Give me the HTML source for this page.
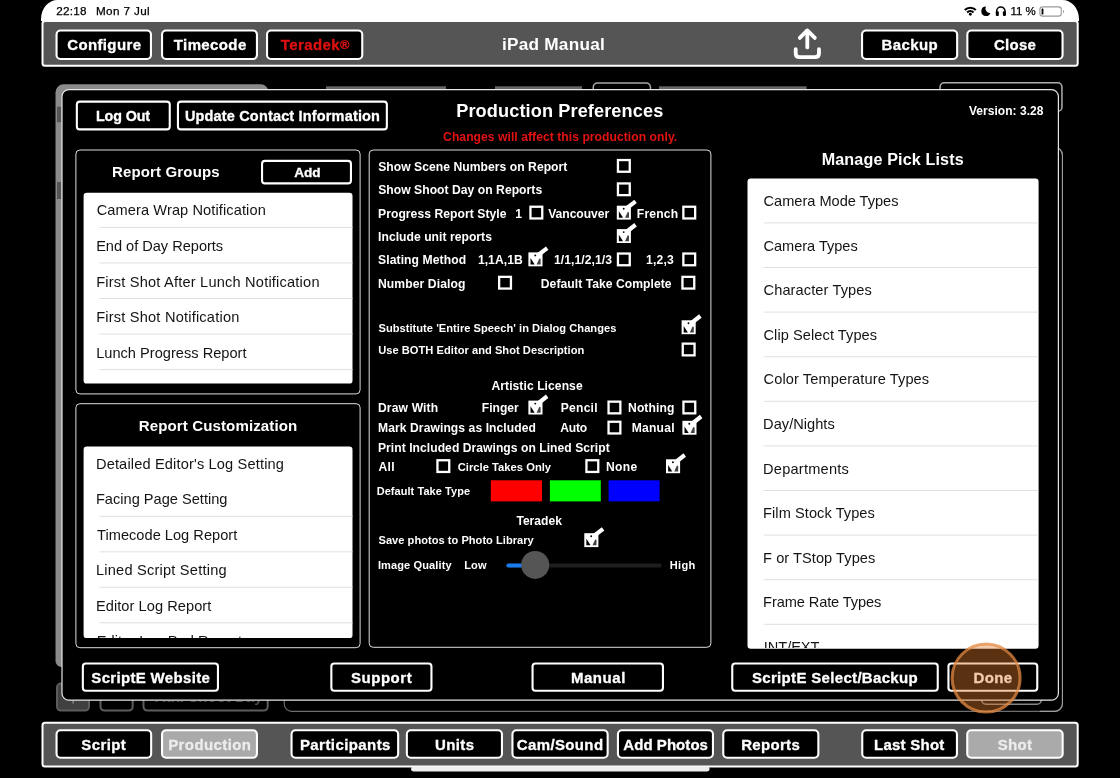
<!DOCTYPE html>
<html lang="en"><head><meta charset="utf-8"><title>Production Preferences</title>
<style>
html,body{margin:0;padding:0;background:#000;}
body{will-change:transform;width:1120px;height:778px;position:relative;overflow:hidden;font-family:"Liberation Sans",Arial,Helvetica,sans-serif;color:#fff;}
div,svg{position:absolute;box-sizing:content-box;}
.t{white-space:pre;font-weight:bold;}
.list{overflow:hidden;}
</style></head><body>

<svg style="left:0;top:0" width="1120" height="778" viewBox="0 0 1120 778">
<path d="M41 21 V19 A16.5 19 0 0 1 57.5 0 H1062.5 A16.5 19 0 0 1 1079 19 V21 Z" fill="#fff"/>
<rect x="42.5" y="21.0" width="1035.2" height="44.8" rx="2.5" fill="#555" stroke="#fff" stroke-width="2"/>
<rect x="56.55" y="30.55" width="94.4" height="28.4" rx="3.95" fill="#000" stroke="#fff" stroke-width="2.1"/>
<rect x="162.05" y="30.55" width="94.9" height="28.4" rx="3.95" fill="#000" stroke="#fff" stroke-width="2.1"/>
<rect x="267.05" y="30.55" width="95.2" height="28.4" rx="3.95" fill="#000" stroke="#fff" stroke-width="2.1"/>
<rect x="862.05" y="30.55" width="95.1" height="28.4" rx="3.95" fill="#000" stroke="#fff" stroke-width="2.1"/>
<rect x="967.35" y="30.55" width="95.2" height="28.4" rx="3.95" fill="#000" stroke="#fff" stroke-width="2.1"/>
<path d="M55.5 661 V92.3 A8 8 0 0 1 63.5 84.3 H260.7 A8 8 0 0 1 268.7 92.3 V120 H62 V667 H61.5 A6 6 0 0 1 55.5 661 Z" fill="#8a8a8a"/>
<rect x="57.0" y="106.7" width="4" height="15.5" fill="#555"/>
<rect x="57.0" y="182.0" width="4" height="17" fill="#555"/>
<rect x="326.0" y="86.3" width="120" height="3.2" fill="#666"/>
<rect x="495.0" y="86.3" width="87" height="3.2" fill="#666"/>
<rect x="593.25" y="83.05" width="57.2" height="28.2" rx="4.25" fill="none" stroke="#a8a8a8" stroke-width="1.5"/>
<rect x="659.0" y="86.3" width="147.6" height="3.2" fill="#666"/>
<rect x="940.05" y="82.75" width="121.9" height="28.5" rx="4.25" fill="none" stroke="#adadad" stroke-width="1.5"/>
<rect x="284.25" y="147.35" width="778.2" height="564.0" rx="7.45" fill="none" stroke="#6e6e6e" stroke-width="1.1"/>
<path d="M1050 147.35 H1054.45 A8 8 0 0 1 1062.45 155.35 V703.35 A8 8 0 0 1 1054.45 711.35 H1040" fill="none" stroke="#9c9c9c" stroke-width="1.1"/>
<rect x="57.0" y="683.5" width="32" height="27.1" rx="4.0" fill="#404040" stroke="#5c5c5c" stroke-width="2"/>
<rect x="72.3" y="700.6" width="1.7" height="3.0" fill="#7a7a7a"/>
<rect x="100.5" y="683.5" width="32.2" height="27.1" rx="4.0" fill="none" stroke="#5c5c5c" stroke-width="2"/>
<rect x="143.5" y="683.5" width="124.2" height="27.1" rx="4.0" fill="none" stroke="#5c5c5c" stroke-width="2"/>
<rect x="981.75" y="680.75" width="59.5" height="23.5" rx="4.25" fill="none" stroke="#858585" stroke-width="1.5"/>
<rect x="62.0" y="89.65" width="996.4" height="610.45" rx="6.9" fill="#000" stroke="#e6e6e6" stroke-width="1.2"/>
<rect x="76.85" y="101.65" width="92.9" height="27.7" rx="2.95" fill="#000" stroke="#fff" stroke-width="2.1"/>
<rect x="177.95" y="101.65" width="208.9" height="27.7" rx="2.95" fill="#000" stroke="#fff" stroke-width="2.1"/>
<rect x="75.9" y="150.0" width="284.2" height="243.9" rx="4.0" fill="#000" stroke="#dcdcdc" stroke-width="1"/>
<rect x="262.05" y="160.85" width="88.9" height="22.5" rx="2.95" fill="#000" stroke="#fff" stroke-width="2.1"/>
<rect x="83.6" y="192.7" width="268.9" height="190.9" rx="3.2" fill="#fff"/>
<rect x="75.9" y="403.7" width="284.2" height="244.0" rx="4.0" fill="#000" stroke="#dcdcdc" stroke-width="1"/>
<rect x="83.6" y="446.5" width="268.9" height="191.6" rx="3.2" fill="#fff"/>
<rect x="369.2" y="150.0" width="341.7" height="497.3" rx="4.0" fill="#000" stroke="#dcdcdc" stroke-width="1"/>
<rect x="617.95" y="160.05" width="11.8" height="11.7" fill="#000" stroke="#fff" stroke-width="2.3"/>
<rect x="617.95" y="183.45" width="11.8" height="11.7" fill="#000" stroke="#fff" stroke-width="2.3"/>
<rect x="530.45" y="206.75" width="11.8" height="11.7" fill="#000" stroke="#fff" stroke-width="2.3"/>
<g transform="translate(616.8 205.7)"><rect x="0" y="0" width="14.1" height="13.9" fill="#fff"/><path d="M2.1 5.6 L6.3 12.1 L2.1 12.1 Z" fill="#000"/><path d="M10.9 6.2 L12.2 6.6 L12.2 12.1 L8.2 12.1 Z" fill="#444"/><circle cx="6.9" cy="3.0" r="0.95" fill="#000"/><path d="M9.0 0.6 L17.5 -6.0 L20.0 -2.6 L13.6 2.4 Z" fill="#fff"/></g>
<rect x="683.35" y="206.75" width="11.8" height="11.7" fill="#000" stroke="#fff" stroke-width="2.3"/>
<g transform="translate(616.8 229.1)"><rect x="0" y="0" width="14.1" height="13.9" fill="#fff"/><path d="M2.1 5.6 L6.3 12.1 L2.1 12.1 Z" fill="#000"/><path d="M10.9 6.2 L12.2 6.6 L12.2 12.1 L8.2 12.1 Z" fill="#444"/><circle cx="6.9" cy="3.0" r="0.95" fill="#000"/><path d="M9.0 0.6 L17.5 -6.0 L20.0 -2.6 L13.6 2.4 Z" fill="#fff"/></g>
<g transform="translate(528.4 252.4)"><rect x="0" y="0" width="14.1" height="13.9" fill="#fff"/><path d="M2.1 5.6 L6.3 12.1 L2.1 12.1 Z" fill="#000"/><path d="M10.9 6.2 L12.2 6.6 L12.2 12.1 L8.2 12.1 Z" fill="#444"/><circle cx="6.9" cy="3.0" r="0.95" fill="#000"/><path d="M9.0 0.6 L17.5 -6.0 L20.0 -2.6 L13.6 2.4 Z" fill="#fff"/></g>
<rect x="617.95" y="253.55" width="11.8" height="11.7" fill="#000" stroke="#fff" stroke-width="2.3"/>
<rect x="683.35" y="253.55" width="11.8" height="11.7" fill="#000" stroke="#fff" stroke-width="2.3"/>
<rect x="499.15" y="276.85" width="11.8" height="11.7" fill="#000" stroke="#fff" stroke-width="2.3"/>
<rect x="682.45" y="276.85" width="11.8" height="11.7" fill="#000" stroke="#fff" stroke-width="2.3"/>
<g transform="translate(681.6 320.3)"><rect x="0" y="0" width="14.1" height="13.9" fill="#fff"/><path d="M2.1 5.6 L6.3 12.1 L2.1 12.1 Z" fill="#000"/><path d="M10.9 6.2 L12.2 6.6 L12.2 12.1 L8.2 12.1 Z" fill="#444"/><circle cx="6.9" cy="3.0" r="0.95" fill="#000"/><path d="M9.0 0.6 L17.5 -6.0 L20.0 -2.6 L13.6 2.4 Z" fill="#fff"/></g>
<rect x="682.75" y="343.65" width="11.8" height="11.7" fill="#000" stroke="#fff" stroke-width="2.3"/>
<g transform="translate(528.4 400.6)"><rect x="0" y="0" width="14.1" height="13.9" fill="#fff"/><path d="M2.1 5.6 L6.3 12.1 L2.1 12.1 Z" fill="#000"/><path d="M10.9 6.2 L12.2 6.6 L12.2 12.1 L8.2 12.1 Z" fill="#444"/><circle cx="6.9" cy="3.0" r="0.95" fill="#000"/><path d="M9.0 0.6 L17.5 -6.0 L20.0 -2.6 L13.6 2.4 Z" fill="#fff"/></g>
<rect x="608.55" y="401.65" width="11.8" height="11.7" fill="#000" stroke="#fff" stroke-width="2.3"/>
<rect x="683.45" y="401.65" width="11.8" height="11.7" fill="#000" stroke="#fff" stroke-width="2.3"/>
<rect x="608.55" y="421.75" width="11.8" height="11.7" fill="#000" stroke="#fff" stroke-width="2.3"/>
<g transform="translate(682.4 420.8)"><rect x="0" y="0" width="14.1" height="13.9" fill="#fff"/><path d="M2.1 5.6 L6.3 12.1 L2.1 12.1 Z" fill="#000"/><path d="M10.9 6.2 L12.2 6.6 L12.2 12.1 L8.2 12.1 Z" fill="#444"/><circle cx="6.9" cy="3.0" r="0.95" fill="#000"/><path d="M9.0 0.6 L17.5 -6.0 L20.0 -2.6 L13.6 2.4 Z" fill="#fff"/></g>
<rect x="437.45" y="460.25" width="11.8" height="11.7" fill="#000" stroke="#fff" stroke-width="2.3"/>
<rect x="586.45" y="460.25" width="11.8" height="11.7" fill="#000" stroke="#fff" stroke-width="2.3"/>
<g transform="translate(666.0 459.3)"><rect x="0" y="0" width="14.1" height="13.9" fill="#fff"/><path d="M2.1 5.6 L6.3 12.1 L2.1 12.1 Z" fill="#000"/><path d="M10.9 6.2 L12.2 6.6 L12.2 12.1 L8.2 12.1 Z" fill="#444"/><circle cx="6.9" cy="3.0" r="0.95" fill="#000"/><path d="M9.0 0.6 L17.5 -6.0 L20.0 -2.6 L13.6 2.4 Z" fill="#fff"/></g>
<rect x="490.8" y="480.3" width="51.2" height="21.1" fill="#f00"/>
<rect x="549.9" y="480.3" width="50.9" height="21.1" fill="#0f0"/>
<rect x="608.6" y="480.3" width="51.0" height="21.1" fill="#00f"/>
<g transform="translate(584.3 533.2)"><rect x="0" y="0" width="14.1" height="13.9" fill="#fff"/><path d="M2.1 5.6 L6.3 12.1 L2.1 12.1 Z" fill="#000"/><path d="M10.9 6.2 L12.2 6.6 L12.2 12.1 L8.2 12.1 Z" fill="#444"/><circle cx="6.9" cy="3.0" r="0.95" fill="#000"/><path d="M9.0 0.6 L17.5 -6.0 L20.0 -2.6 L13.6 2.4 Z" fill="#fff"/></g>
<rect x="506.4" y="563.6" width="155.3" height="4.0" rx="2.0" fill="#1e1e20"/>
<rect x="506.4" y="563.6" width="23.6" height="4.0" rx="2.0" fill="#1a7bf0"/>
<circle cx="535.2" cy="564.9" r="14" fill="#555"/>
<rect x="747.5" y="178.5" width="291.1" height="470.3" rx="3.2" fill="#fff"/>
<rect x="82.85" y="663.45" width="135.1" height="27.3" rx="2.95" fill="#000" stroke="#fff" stroke-width="2.1"/>
<rect x="331.35" y="663.45" width="100.1" height="27.3" rx="2.95" fill="#000" stroke="#fff" stroke-width="2.1"/>
<rect x="532.55" y="663.45" width="130.4" height="27.3" rx="2.95" fill="#000" stroke="#fff" stroke-width="2.1"/>
<rect x="732.25" y="663.45" width="205.5" height="27.3" rx="2.95" fill="#000" stroke="#fff" stroke-width="2.1"/>
<rect x="948.45" y="663.45" width="88.8" height="27.3" rx="2.95" fill="#000" stroke="#fff" stroke-width="2.1"/>
<rect x="42.5" y="722.7" width="1035.2" height="43.8" rx="2.5" fill="#555" stroke="#fff" stroke-width="2"/>
<rect x="56.55" y="730.25" width="94.6" height="27.5" rx="3.95" fill="#000" stroke="#fff" stroke-width="2.1"/>
<rect x="162.05" y="730.25" width="94.9" height="27.5" rx="3.95" fill="#aaa" stroke="#fff" stroke-width="2.1"/>
<rect x="291.55" y="730.25" width="106.6" height="27.5" rx="3.95" fill="#000" stroke="#fff" stroke-width="2.1"/>
<rect x="406.85" y="730.25" width="95.1" height="27.5" rx="3.95" fill="#000" stroke="#fff" stroke-width="2.1"/>
<rect x="512.45" y="730.25" width="95.2" height="27.5" rx="3.95" fill="#000" stroke="#fff" stroke-width="2.1"/>
<rect x="617.95" y="730.25" width="95.0" height="27.5" rx="3.95" fill="#000" stroke="#fff" stroke-width="2.1"/>
<rect x="723.25" y="730.25" width="95.1" height="27.5" rx="3.95" fill="#000" stroke="#fff" stroke-width="2.1"/>
<rect x="862.25" y="730.25" width="94.7" height="27.5" rx="3.95" fill="#000" stroke="#fff" stroke-width="2.1"/>
<rect x="967.25" y="730.25" width="95.4" height="27.5" rx="3.95" fill="#aaa" stroke="#fff" stroke-width="2.1"/>
<rect x="411.0" y="766.6" width="298.6" height="4.8" rx="2.4" fill="#eee"/>
<rect x="99.5" y="226.9" width="253.0" height="1.0" fill="#e0e0e0"/>
<rect x="99.5" y="262.45" width="253.0" height="1.0" fill="#e0e0e0"/>
<rect x="99.5" y="298.0" width="253.0" height="1.0" fill="#e0e0e0"/>
<rect x="99.5" y="333.55" width="253.0" height="1.0" fill="#e0e0e0"/>
<rect x="99.5" y="369.1" width="253.0" height="1.0" fill="#e0e0e0"/>
<rect x="99.5" y="515.87" width="253.0" height="1.0" fill="#e0e0e0"/>
<rect x="99.5" y="551.34" width="253.0" height="1.0" fill="#e0e0e0"/>
<rect x="99.5" y="586.81" width="253.0" height="1.0" fill="#e0e0e0"/>
<rect x="99.5" y="622.28" width="253.0" height="1.0" fill="#e0e0e0"/>
<rect x="763.7" y="222.4" width="274.6" height="1.0" fill="#e0e0e0"/>
<rect x="763.7" y="267.0" width="274.6" height="1.0" fill="#e0e0e0"/>
<rect x="763.7" y="311.6" width="274.6" height="1.0" fill="#e0e0e0"/>
<rect x="763.7" y="356.2" width="274.6" height="1.0" fill="#e0e0e0"/>
<rect x="763.7" y="400.8" width="274.6" height="1.0" fill="#e0e0e0"/>
<rect x="763.7" y="445.4" width="274.6" height="1.0" fill="#e0e0e0"/>
<rect x="763.7" y="490.0" width="274.6" height="1.0" fill="#e0e0e0"/>
<rect x="763.7" y="534.6" width="274.6" height="1.0" fill="#e0e0e0"/>
<rect x="763.7" y="579.2" width="274.6" height="1.0" fill="#e0e0e0"/>
<rect x="763.7" y="623.8" width="274.6" height="1.0" fill="#e0e0e0"/>
</svg>
<div id="t1" class="t" style="left:56.19px;top:5.3px;font-size:11.7px;line-height:11.7px;font-weight:normal;color:#000;letter-spacing:0.277px;-webkit-text-stroke:0.25px #000;">22:18</div>
<div id="t2" class="t" style="left:95.88px;top:5.3px;font-size:11.7px;line-height:11.7px;font-weight:normal;color:#000;letter-spacing:0.395px;-webkit-text-stroke:0.25px #000;">Mon 7 Jul</div>
<div id="t3" class="t" style="left:1010.43px;top:6.47px;font-size:11.5px;line-height:11.5px;font-weight:normal;color:#000;letter-spacing:-0.035px;-webkit-text-stroke:0.25px #000;">11 %</div>
<svg style="left:960px;top:2px" width="110" height="18" viewBox="960 2 110 18">
<g fill="none" stroke="#000">
<path d="M964.78 10.08 A7.8 7.8 0 0 1 975.82 10.08" stroke-width="2.1"/>
<path d="M967.12 12.42 A4.5 4.5 0 0 1 973.48 12.42" stroke-width="2"/>
</g>
<circle cx="970.3" cy="14.3" r="1.45" fill="#000"/>
<path d="M985.9 6.6 A4.7 4.7 0 1 0 990.4 12.9 A4.4 4.4 0 0 1 985.9 6.6 Z" fill="#000"/>
<path d="M996.65 15.2 V11.2 A4.2 4.2 0 0 1 1005.05 11.2 V15.2" fill="none" stroke="#000" stroke-width="1.5"/>
<rect x="995.9" y="11.3" width="2.9" height="4.6" rx="0.9" fill="#000"/>
<rect x="1002.9" y="11.3" width="2.9" height="4.6" rx="0.9" fill="#000"/>
<rect x="1039.9" y="6.9" width="21.4" height="9.2" rx="2.7" fill="none" stroke="#9a9a9a" stroke-width="1.1"/>
<rect x="1041.6" y="8.5" width="1.8" height="6.1" rx="0.6" fill="#000"/>
<path d="M1063 9.7 Q1065.2 11.5 1063 13.3 Z" fill="#9a9a9a"/>
</svg>
<div id="t4" class="t" style="left:67.22px;top:36.57px;font-size:15px;line-height:15px;letter-spacing:0.367px;-webkit-text-stroke:0.3px #fff;">Configure</div>
<div id="t5" class="t" style="left:173.86px;top:36.57px;font-size:15px;line-height:15px;letter-spacing:0.373px;-webkit-text-stroke:0.3px #fff;">Timecode</div>
<div id="t6" class="t" style="left:280.82px;top:36.57px;font-size:15px;line-height:15px;color:#e01010;letter-spacing:0.391px;-webkit-text-stroke:0.3px #e01010;">Teradek<span style="font-size:12.8px;vertical-align:0.8px">®</span></div>
<div id="t7" class="t" style="left:501.91px;top:36.14px;font-size:17.2px;line-height:17.2px;letter-spacing:0.262px;">iPad Manual</div>
<svg style="left:788px;top:24px" width="40" height="40" viewBox="788 24 40 40">
<g fill="none" stroke="#fff" stroke-width="3.8" stroke-linecap="round" stroke-linejoin="round">
<path d="M807.3 30.6 V47.4"/>
<path d="M799.8 37.9 L807.3 30.4 L814.8 37.9"/>
<path d="M795.7 49.2 V53.2 Q795.7 57.2 799.7 57.2 H815 Q819 57.2 819 53.2 V49.2"/>
</g></svg>
<div id="t8" class="t" style="left:881.45px;top:36.57px;font-size:15px;line-height:15px;letter-spacing:0.416px;-webkit-text-stroke:0.3px #fff;">Backup</div>
<div id="t9" class="t" style="left:993.99px;top:36.57px;font-size:15px;line-height:15px;letter-spacing:0.283px;-webkit-text-stroke:0.3px #fff;">Close</div>
<div style="left:140px;top:701px;width:130px;height:11px;overflow:hidden;"><div id="t10" class="t" style="left:15.0px;top:-11.7px;font-size:15px;line-height:15px;color:#4a4a4a;">Add Shoot Day</div></div>
<div id="t11" class="t" style="left:95.92px;top:108.66px;font-size:14.3px;line-height:14.3px;letter-spacing:-0.108px;-webkit-text-stroke:0.3px #fff;">Log Out</div>
<div id="t12" class="t" style="left:184.89px;top:108.57px;font-size:14.5px;line-height:14.5px;letter-spacing:0.167px;-webkit-text-stroke:0.3px #fff;">Update Contact Information</div>
<div id="t13" class="t" style="left:456.24px;top:102.44px;font-size:18.15px;line-height:18.15px;letter-spacing:0.113px;">Production Preferences</div>
<div id="t14" class="t" style="left:443.11px;top:131.02px;font-size:12.15px;line-height:12.15px;color:#e51212;letter-spacing:0.039px;">Changes will affect this production only.</div>
<div id="t15" class="t" style="left:968.9px;top:104.94px;font-size:12px;line-height:12px;letter-spacing:0.039px;">Version: 3.28</div>
<div id="t16" class="t" style="left:111.94px;top:163.5px;font-size:15px;line-height:15px;letter-spacing:0.153px;">Report Groups</div>
<div id="t17" class="t" style="left:294.16px;top:165.61px;font-size:13.6px;line-height:13.6px;letter-spacing:-0.053px;-webkit-text-stroke:0.3px #fff;">Add</div>
<div class="list" style="left:83px;top:193px;width:270px;height:191px;"><div id="t18" class="t" style="left:13.66px;top:9.64px;font-size:14.6px;line-height:14.6px;font-weight:normal;color:#141414;letter-spacing:0.099px;">Camera Wrap Notification</div><div id="t19" class="t" style="left:13.16px;top:45.64px;font-size:14.6px;line-height:14.6px;font-weight:normal;color:#141414;letter-spacing:-0.021px;">End of Day Reports</div><div id="t20" class="t" style="left:13.16px;top:82.24px;font-size:14.6px;line-height:14.6px;font-weight:normal;color:#141414;letter-spacing:0.199px;">First Shot After Lunch Notification</div><div id="t21" class="t" style="left:13.16px;top:116.64px;font-size:14.6px;line-height:14.6px;font-weight:normal;color:#141414;letter-spacing:0.203px;">First Shot Notification</div><div id="t22" class="t" style="left:13.16px;top:153.24px;font-size:14.6px;line-height:14.6px;font-weight:normal;color:#141414;letter-spacing:0.014px;">Lunch Progress Report</div></div>
<div id="t23" class="t" style="left:138.74px;top:417.63px;font-size:15.08px;line-height:15.08px;letter-spacing:0.096px;">Report Customization</div>
<div class="list" style="left:83px;top:446px;width:270px;height:192px;"><div id="t24" class="t" style="left:12.95px;top:10.64px;font-size:14.6px;line-height:14.6px;font-weight:normal;color:#141414;letter-spacing:0.153px;">Detailed Editor's Log Setting</div><div id="t25" class="t" style="left:12.95px;top:46.09px;font-size:14.6px;line-height:14.6px;font-weight:normal;color:#141414;letter-spacing:0.006px;">Facing Page Setting</div><div id="t26" class="t" style="left:14.08px;top:81.54px;font-size:14.6px;line-height:14.6px;font-weight:normal;color:#141414;letter-spacing:0.019px;">Timecode Log Report</div><div id="t27" class="t" style="left:12.95px;top:116.99px;font-size:14.6px;line-height:14.6px;font-weight:normal;color:#141414;letter-spacing:0.215px;">Lined Script Setting</div><div id="t28" class="t" style="left:12.95px;top:153.44px;font-size:14.6px;line-height:14.6px;font-weight:normal;color:#141414;letter-spacing:0.061px;">Editor Log Report</div><div id="t29" class="t" style="left:13.7px;top:187.89px;font-size:14.6px;line-height:14.6px;font-weight:normal;color:#141414;letter-spacing:0.05px;">Editor Log Pad Report</div></div>
<div id="t30" class="t" style="left:378.18px;top:161.12px;font-size:12.15px;line-height:12.15px;letter-spacing:0.037px;">Show Scene Numbers on Report</div>
<div id="t31" class="t" style="left:378.19px;top:184.12px;font-size:12.15px;line-height:12.15px;letter-spacing:0.03px;">Show Shoot Day on Reports</div>
<div id="t32" class="t" style="left:378.01px;top:207.62px;font-size:12.15px;line-height:12.15px;letter-spacing:0.048px;">Progress Report Style</div>
<div id="t33" class="t" style="left:515.3px;top:207.62px;font-size:12.15px;line-height:12.15px;">1</div>
<div id="t34" class="t" style="left:548.21px;top:207.62px;font-size:12.15px;line-height:12.15px;letter-spacing:-0.053px;">Vancouver</div>
<div id="t35" class="t" style="left:636.8px;top:207.62px;font-size:12.15px;line-height:12.15px;letter-spacing:0.168px;">French</div>
<div id="t36" class="t" style="left:378.05px;top:231.02px;font-size:12.15px;line-height:12.15px;letter-spacing:0.03px;">Include unit reports</div>
<div id="t37" class="t" style="left:378.07px;top:254.12px;font-size:12.15px;line-height:12.15px;letter-spacing:0.084px;">Slating Method</div>
<div id="t38" class="t" style="left:477.91px;top:254.12px;font-size:12.15px;line-height:12.15px;letter-spacing:0.041px;">1,1A,1B</div>
<div id="t39" class="t" style="left:554.0px;top:254.12px;font-size:12.15px;line-height:12.15px;letter-spacing:0.052px;">1/1,1/2,1/3</div>
<div id="t40" class="t" style="left:646.12px;top:254.12px;font-size:12.15px;line-height:12.15px;letter-spacing:0.135px;">1,2,3</div>
<div id="t41" class="t" style="left:377.93px;top:277.52px;font-size:12.15px;line-height:12.15px;letter-spacing:0.095px;">Number Dialog</div>
<div id="t42" class="t" style="left:540.8px;top:277.52px;font-size:12.15px;line-height:12.15px;letter-spacing:0.039px;">Default Take Complete</div>
<div id="t43" class="t" style="left:378.47px;top:322.59px;font-size:11.12px;line-height:11.12px;letter-spacing:0.026px;">Substitute 'Entire Speech' in Dialog Changes</div>
<div id="t44" class="t" style="left:378.2px;top:345.39px;font-size:11.12px;line-height:11.12px;letter-spacing:0.035px;">Use BOTH Editor and Shot Description</div>
<div id="t45" class="t" style="left:491.45px;top:379.56px;font-size:12.1px;line-height:12.1px;letter-spacing:0.076px;">Artistic License</div>
<div id="t46" class="t" style="left:377.99px;top:401.76px;font-size:12.1px;line-height:12.1px;letter-spacing:0.142px;">Draw With</div>
<div id="t47" class="t" style="left:481.79px;top:401.76px;font-size:12.1px;line-height:12.1px;letter-spacing:0.006px;">Finger</div>
<div id="t48" class="t" style="left:560.83px;top:401.76px;font-size:12.1px;line-height:12.1px;letter-spacing:0.219px;">Pencil</div>
<div id="t49" class="t" style="left:628.05px;top:401.76px;font-size:12.1px;line-height:12.1px;letter-spacing:0.097px;">Nothing</div>
<div id="t50" class="t" style="left:378.0px;top:422.06px;font-size:12.1px;line-height:12.1px;letter-spacing:0.085px;">Mark Drawings as Included</div>
<div id="t51" class="t" style="left:560.19px;top:422.06px;font-size:12.1px;line-height:12.1px;letter-spacing:-0.196px;">Auto</div>
<div id="t52" class="t" style="left:631.84px;top:422.06px;font-size:12.1px;line-height:12.1px;letter-spacing:0.2px;">Manual</div>
<div id="t53" class="t" style="left:378.0px;top:442.46px;font-size:12.1px;line-height:12.1px;letter-spacing:0.05px;">Print Included Drawings on Lined Script</div>
<div id="t54" class="t" style="left:378.57px;top:460.76px;font-size:12.1px;line-height:12.1px;letter-spacing:0.235px;">All</div>
<div id="t55" class="t" style="left:457.78px;top:461.52px;font-size:11.2px;line-height:11.2px;letter-spacing:0.015px;">Circle Takes Only</div>
<div id="t56" class="t" style="left:606.1px;top:460.76px;font-size:12.1px;line-height:12.1px;letter-spacing:0.287px;">None</div>
<div id="t57" class="t" style="left:376.65px;top:485.52px;font-size:10.96px;line-height:10.96px;letter-spacing:0.079px;">Default Take Type</div>
<div id="t58" class="t" style="left:516.39px;top:514.76px;font-size:12.1px;line-height:12.1px;letter-spacing:0.013px;">Teradek</div>
<div id="t59" class="t" style="left:378.5px;top:534.61px;font-size:11.09px;line-height:11.09px;letter-spacing:0.028px;">Save photos to Photo Library</div>
<div id="t60" class="t" style="left:377.88px;top:560.45px;font-size:11.05px;line-height:11.05px;letter-spacing:0.106px;">Image Quality</div>
<div id="t61" class="t" style="left:464.13px;top:560.45px;font-size:11.05px;line-height:11.05px;letter-spacing:0.153px;">Low</div>
<div id="t62" class="t" style="left:669.77px;top:560.45px;font-size:11.05px;line-height:11.05px;letter-spacing:0.315px;">High</div>
<div id="t63" class="t" style="left:821.7px;top:150.53px;font-size:16.15px;line-height:16.15px;letter-spacing:0.127px;">Manage Pick Lists</div>
<div class="list" style="left:748px;top:179px;width:290px;height:469px;"><div id="t64" class="t" style="left:15.53px;top:14.64px;font-size:14.6px;line-height:14.6px;font-weight:normal;color:#141414;letter-spacing:-0.013px;">Camera Mode Types</div><div id="t65" class="t" style="left:15.53px;top:60.24px;font-size:14.6px;line-height:14.6px;font-weight:normal;color:#141414;letter-spacing:-0.04px;">Camera Types</div><div id="t66" class="t" style="left:15.53px;top:103.84px;font-size:14.6px;line-height:14.6px;font-weight:normal;color:#141414;letter-spacing:0.106px;">Character Types</div><div id="t67" class="t" style="left:15.53px;top:149.44px;font-size:14.6px;line-height:14.6px;font-weight:normal;color:#141414;letter-spacing:0.067px;">Clip Select Types</div><div id="t68" class="t" style="left:15.53px;top:193.04px;font-size:14.6px;line-height:14.6px;font-weight:normal;color:#141414;letter-spacing:0.105px;">Color Temperature Types</div><div id="t69" class="t" style="left:15.09px;top:237.64px;font-size:14.6px;line-height:14.6px;font-weight:normal;color:#141414;letter-spacing:0.033px;">Day/Nights</div><div id="t70" class="t" style="left:15.09px;top:283.24px;font-size:14.6px;line-height:14.6px;font-weight:normal;color:#141414;letter-spacing:0.221px;">Departments</div><div id="t71" class="t" style="left:15.09px;top:326.84px;font-size:14.6px;line-height:14.6px;font-weight:normal;color:#141414;letter-spacing:0.06px;">Film Stock Types</div><div id="t72" class="t" style="left:15.09px;top:372.44px;font-size:14.6px;line-height:14.6px;font-weight:normal;color:#141414;letter-spacing:0.053px;">F or TStop Types</div><div id="t73" class="t" style="left:15.09px;top:416.04px;font-size:14.6px;line-height:14.6px;font-weight:normal;color:#141414;letter-spacing:-0.101px;">Frame Rate Types</div><div id="t74" class="t" style="left:15.8px;top:460.64px;font-size:14.6px;line-height:14.6px;font-weight:normal;color:#141414;letter-spacing:-0.05px;">INT/EXT</div></div>
<div id="t75" class="t" style="left:91.31px;top:669.92px;font-size:15px;line-height:15px;letter-spacing:0.33px;-webkit-text-stroke:0.3px #fff;">ScriptE Website</div>
<div id="t76" class="t" style="left:351.1px;top:669.92px;font-size:15px;line-height:15px;letter-spacing:0.507px;-webkit-text-stroke:0.3px #fff;">Support</div>
<div id="t77" class="t" style="left:570.94px;top:669.92px;font-size:15px;line-height:15px;letter-spacing:0.547px;-webkit-text-stroke:0.3px #fff;">Manual</div>
<div id="t78" class="t" style="left:751.93px;top:669.92px;font-size:15px;line-height:15px;letter-spacing:0.327px;-webkit-text-stroke:0.3px #fff;">ScriptE Select/Backup</div>
<div id="t79" class="t" style="left:973.39px;top:669.92px;font-size:15px;line-height:15px;letter-spacing:0.441px;-webkit-text-stroke:0.3px #fff;">Done</div>
<div id="t80" class="t" style="left:81.36px;top:736.82px;font-size:15px;line-height:15px;letter-spacing:0.375px;-webkit-text-stroke:0.3px #fff;">Script</div>
<div id="t81" class="t" style="left:168.19px;top:736.82px;font-size:15px;line-height:15px;color:#ececec;letter-spacing:0.405px;-webkit-text-stroke:0.3px #ececec;">Production</div>
<div id="t82" class="t" style="left:299.95px;top:736.82px;font-size:15px;line-height:15px;letter-spacing:0.42px;-webkit-text-stroke:0.3px #fff;">Participants</div>
<div id="t83" class="t" style="left:434.94px;top:736.82px;font-size:15px;line-height:15px;letter-spacing:0.406px;-webkit-text-stroke:0.3px #fff;">Units</div>
<div id="t84" class="t" style="left:516.77px;top:736.82px;font-size:15px;line-height:15px;letter-spacing:0.371px;-webkit-text-stroke:0.3px #fff;">Cam/Sound</div>
<div id="t85" class="t" style="left:623.29px;top:736.82px;font-size:15px;line-height:15px;letter-spacing:0.058px;-webkit-text-stroke:0.3px #fff;">Add Photos</div>
<div id="t86" class="t" style="left:741.15px;top:736.82px;font-size:15px;line-height:15px;letter-spacing:0.317px;-webkit-text-stroke:0.3px #fff;">Reports</div>
<div id="t87" class="t" style="left:873.97px;top:736.82px;font-size:15px;line-height:15px;letter-spacing:0.255px;-webkit-text-stroke:0.3px #fff;">Last Shot</div>
<div id="t88" class="t" style="left:997.79px;top:736.82px;font-size:15px;line-height:15px;color:#ececec;letter-spacing:0.299px;-webkit-text-stroke:0.3px #ececec;">Shot</div>
<svg style="left:0;top:0" width="1120" height="778"><circle cx="986.1" cy="678.1" r="34" fill="rgba(225,125,45,0.40)" stroke="rgba(228,138,68,0.74)" stroke-width="3"/></svg>
</body></html>
